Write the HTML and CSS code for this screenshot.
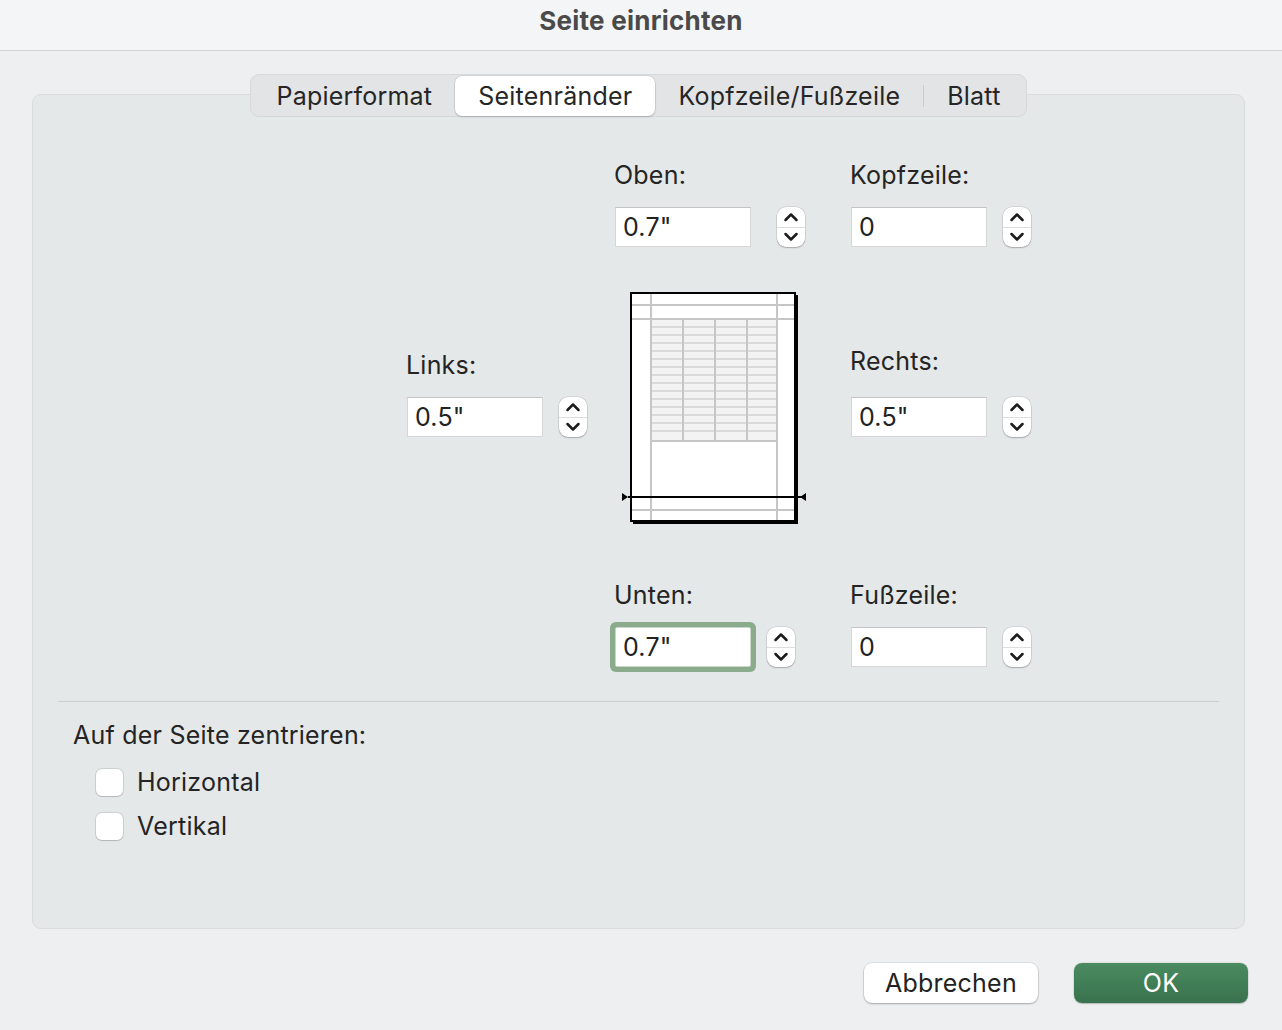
FILE: index.html
```html
<!DOCTYPE html>
<html lang="de">
<head>
<meta charset="utf-8">
<title>Seite einrichten</title>
<link rel="stylesheet" href="styles.css">
</head>
<body>
<header class="titlebar">Seite einrichten</header>

<div class="tabs-wrap">
  <div class="tabs">
    <span class="tab">Papierformat</span>
    <span class="tab active">Seitenränder</span>
    <span class="tab">Kopfzeile/Fußzeile</span>
    <span class="tab-sep"></span>
    <span class="tab">Blatt</span>
  </div>
</div>

<section class="panel">
  <div class="margins">
    <div class="group col-b row-1">
      <div class="label">Oben:</div>
      <div class="field-row">
        <input class="field" value="0.7&quot;">
        <div class="spinner far"><svg width="28" height="40" viewBox="0 0 28 40"><path d="M8.5 13 L14 7.5 L19.5 13" /><line x1="0" y1="20.5" x2="28" y2="20.5" class="mid"/><path d="M8.5 27 L14 32.5 L19.5 27" /></svg></div>
      </div>
    </div>
    <div class="group col-c row-1">
      <div class="label">Kopfzeile:</div>
      <div class="field-row">
        <input class="field" value="0">
        <div class="spinner"><svg width="28" height="40" viewBox="0 0 28 40"><path d="M8.5 13 L14 7.5 L19.5 13" /><line x1="0" y1="20.5" x2="28" y2="20.5" class="mid"/><path d="M8.5 27 L14 32.5 L19.5 27" /></svg></div>
      </div>
    </div>

    <div class="group col-a row-2 links">
      <div class="label">Links:</div>
      <div class="field-row">
        <input class="field" value="0.5&quot;">
        <div class="spinner"><svg width="28" height="40" viewBox="0 0 28 40"><path d="M8.5 13 L14 7.5 L19.5 13" /><line x1="0" y1="20.5" x2="28" y2="20.5" class="mid"/><path d="M8.5 27 L14 32.5 L19.5 27" /></svg></div>
      </div>
    </div>
    <div class="preview col-b row-2">
      <svg width="190" height="238" viewBox="0 0 190 238">
        <rect x="13" y="4" width="165" height="229" fill="#000"/>
        <rect x="11" y="2" width="164" height="228" fill="#fff" stroke="#000" stroke-width="2"/>
        <rect x="31" y="28" width="126" height="122" fill="#f3f3f3"/>
        <g stroke="#d2d2d2" stroke-width="1.6">
          <line x1="31" y1="36" x2="157" y2="36"/>
          <line x1="31" y1="44" x2="157" y2="44"/>
          <line x1="31" y1="52" x2="157" y2="52"/>
          <line x1="31" y1="60" x2="157" y2="60"/>
          <line x1="31" y1="68" x2="157" y2="68"/>
          <line x1="31" y1="76" x2="157" y2="76"/>
          <line x1="31" y1="84" x2="157" y2="84"/>
          <line x1="31" y1="92" x2="157" y2="92"/>
          <line x1="31" y1="100" x2="157" y2="100"/>
          <line x1="31" y1="108" x2="157" y2="108"/>
          <line x1="31" y1="116" x2="157" y2="116"/>
          <line x1="31" y1="124" x2="157" y2="124"/>
          <line x1="31" y1="132" x2="157" y2="132"/>
          <line x1="31" y1="140" x2="157" y2="140"/>
        </g>
        <g stroke="#c6c6c6" stroke-width="2">
          <line x1="31" y1="2" x2="31" y2="230"/>
          <line x1="157" y1="2" x2="157" y2="230"/>
          <line x1="11" y1="14" x2="175" y2="14"/>
          <line x1="11" y1="28" x2="175" y2="28"/>
          <line x1="11" y1="219" x2="175" y2="219"/>
          <line x1="31" y1="150" x2="157" y2="150"/>
          <line x1="63" y1="28" x2="63" y2="150"/>
          <line x1="95" y1="28" x2="95" y2="150"/>
          <line x1="127" y1="28" x2="127" y2="150"/>
        </g>
        <rect x="11" y="2" width="164" height="228" fill="none" stroke="#000" stroke-width="2"/>
        <line x1="8" y1="206" x2="182" y2="206" stroke="#000" stroke-width="2"/>
        <polygon points="2,202 8,206 2,210" fill="#000"/>
        <polygon points="186,202 180,206 186,210" fill="#000"/>
      </svg>
    </div>
    <div class="group col-c row-2 rechts">
      <div class="label">Rechts:</div>
      <div class="field-row">
        <input class="field" value="0.5&quot;">
        <div class="spinner"><svg width="28" height="40" viewBox="0 0 28 40"><path d="M8.5 13 L14 7.5 L19.5 13" /><line x1="0" y1="20.5" x2="28" y2="20.5" class="mid"/><path d="M8.5 27 L14 32.5 L19.5 27" /></svg></div>
      </div>
    </div>

    <div class="group col-b row-3">
      <div class="label">Unten:</div>
      <div class="field-row">
        <input class="field focused" value="0.7&quot;">
        <div class="spinner"><svg width="28" height="40" viewBox="0 0 28 40"><path d="M8.5 13 L14 7.5 L19.5 13" /><line x1="0" y1="20.5" x2="28" y2="20.5" class="mid"/><path d="M8.5 27 L14 32.5 L19.5 27" /></svg></div>
      </div>
    </div>
    <div class="group col-c row-3">
      <div class="label">Fußzeile:</div>
      <div class="field-row">
        <input class="field" value="0">
        <div class="spinner"><svg width="28" height="40" viewBox="0 0 28 40"><path d="M8.5 13 L14 7.5 L19.5 13" /><line x1="0" y1="20.5" x2="28" y2="20.5" class="mid"/><path d="M8.5 27 L14 32.5 L19.5 27" /></svg></div>
      </div>
    </div>
  </div>

  <hr class="divider">

  <div class="center-title">Auf der Seite zentrieren:</div>
  <div class="checks">
    <label class="check"><span class="box"></span><span>Horizontal</span></label>
    <label class="check"><span class="box"></span><span>Vertikal</span></label>
  </div>
</section>

<footer class="buttons">
  <button class="btn">Abbrechen</button>
  <button class="btn primary">OK</button>
</footer>
</body>
</html>
```

FILE: styles.css
```css
* { box-sizing: border-box; }

html, body {
  margin: 0;
  padding: 0;
}

body {
  width: 1282px;
  height: 1030px;
  overflow: hidden;
  background: #eeeff0;
  font-family: Inter, "Noto Sans", "Liberation Sans", sans-serif;
  font-size: 25px;
  letter-spacing: 0.22px;
  color: #242424;
}

.titlebar {
  height: 51px;
  line-height: 42px;
  text-align: center;
  font-weight: 700;
  font-size: 26px;
  letter-spacing: 0.25px;
  color: #4a4a4a;
  background: #f4f5f6;
  border-bottom: 1px solid #d3d4d5;
}

.tabs-wrap {
  position: relative;
  z-index: 1;
  display: flex;
  justify-content: center;
  margin: 23px 0 -23px;
  padding-right: 5px;
}

.tabs {
  display: flex;
  align-items: center;
  height: 43px;
  padding: 0 2px;
  background: #e2e4e5;
  border: 1px solid #d6d8d9;
  border-radius: 9px;
}

.tab {
  height: 40px;
  line-height: 40px;
  padding: 0 23px;
  border-radius: 7px;
  color: #262626;
  white-space: nowrap;
}

.tab.active {
  background: #fff;
  box-shadow: 0 0 0 0.5px rgba(0,0,0,0.12), 0 1px 2px rgba(0,0,0,0.18);
}

.tab-sep {
  width: 1px;
  height: 22px;
  background: #c9cbcc;
}

.panel {
  width: 1213px;
  height: 835px;
  margin-left: 32px;
  background: #e5e8e9;
  border: 1px solid #d9dcdd;
  border-radius: 9px;
  padding-top: 65px;
}

.margins {
  display: grid;
  grid-template-columns: 208px 236px 200px;
  grid-template-rows: 132px 288px auto;
  margin-left: 373px;
}

.col-a { grid-column: 1; }
.col-b { grid-column: 2; }
.col-c { grid-column: 3; }
.row-1 { grid-row: 1; }
.row-2 { grid-row: 2; }
.row-3 { grid-row: 3; }

.group { align-self: start; }
.links { margin-top: 58px; }
.rechts { margin-top: 54px; }
.rechts .label { margin-bottom: 21px; }

.label {
  height: 30px;
  line-height: 30px;
  margin-bottom: 17px;
  white-space: nowrap;
}

.field-row {
  display: flex;
  align-items: flex-start;
}

.field {
  width: 136px;
  height: 40px;
  margin: 0 0 0 1px;
  padding: 0 0 0 7px;
  font: inherit;
  letter-spacing: inherit;
  color: #222;
  background: #fff;
  border: 1px solid #d6d6d6;
  border-top-color: #c4c4c4;
  border-radius: 0;
  outline: none;
}

.field.focused {
  border-color: #c9d6ca;
  box-shadow: 0 0 0 5px #8aab8c;
  border-radius: 2px;
}

.spinner {
  width: 28px;
  height: 40px;
  margin-left: 16px;
  background: #fff;
  border-radius: 9px;
  box-shadow: 0 0 0 0.5px rgba(0,0,0,0.14), 0 1px 1.5px rgba(0,0,0,0.22);
}

.spinner.far { margin-left: 26px; }

.spinner svg { display: block; }

.spinner path {
  fill: none;
  stroke: #1c1c1c;
  stroke-width: 2.5;
  stroke-linecap: round;
  stroke-linejoin: round;
}

.spinner .mid {
  stroke: #dedede;
  stroke-width: 1;
}

.preview {
  align-self: start;
  margin-left: 6px;
  margin-top: -1px;
}

.preview svg { display: block; }

.divider {
  height: 0;
  margin: 34px 25px 0;
  border: 0;
  border-top: 1px solid #cdd0d1;
}

.center-title {
  margin-top: 18px;
  padding-left: 40px;
  height: 30px;
  line-height: 30px;
}

.checks {
  display: flex;
  flex-direction: column;
  gap: 14px;
  margin-top: 17px;
  padding-left: 63px;
}

.check {
  display: flex;
  align-items: center;
  gap: 14px;
  height: 30px;
}

.box {
  width: 27px;
  height: 27px;
  background: #fff;
  border-radius: 6px;
  box-shadow: 0 0 0 1px rgba(0,0,0,0.1), 0 1px 1px rgba(0,0,0,0.12);
}

.buttons {
  display: flex;
  justify-content: flex-end;
  gap: 36px;
  margin-top: 34px;
  padding-right: 34px;
}

.btn {
  width: 174px;
  height: 40px;
  font: inherit;
  letter-spacing: inherit;
  color: #222;
  background: #fff;
  border: 0;
  border-radius: 8px;
  box-shadow: 0 0 0 0.5px rgba(0,0,0,0.14), 0 1px 2px rgba(0,0,0,0.25);
  padding: 0;
}

.btn.primary {
  color: #fff;
  background: linear-gradient(#4b8b61, #38724e);
  box-shadow: 0 0 0 0.5px rgba(0,0,0,0.1), 0 1px 1.5px rgba(0,0,0,0.2);
}
```
